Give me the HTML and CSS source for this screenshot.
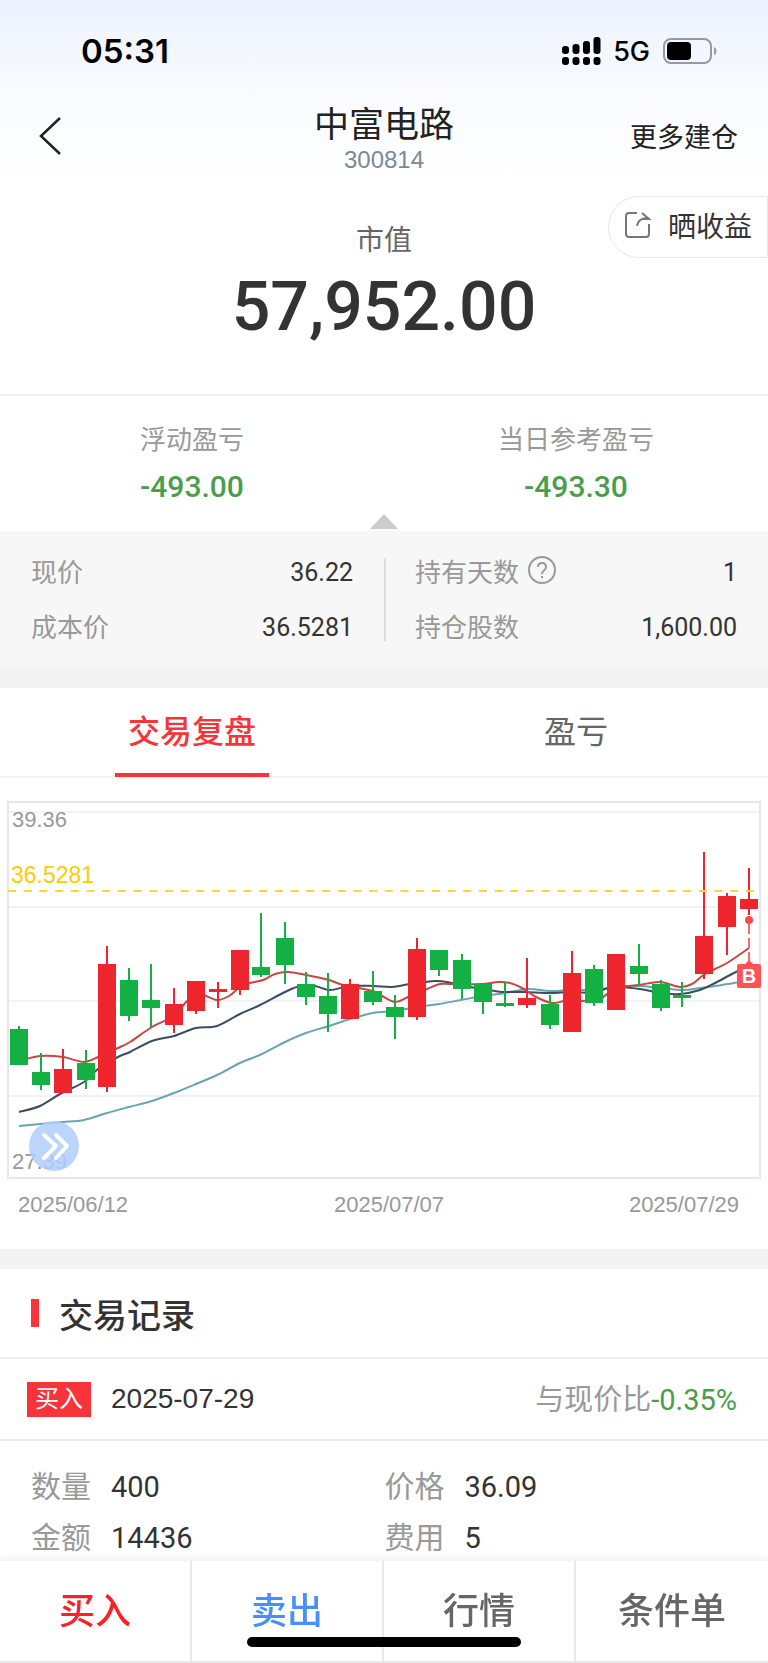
FILE: index.html
```
<!DOCTYPE html>
<html lang="zh-CN">
<head>
<meta charset="utf-8">
<meta name="viewport" content="width=device-width, initial-scale=1">
<title>中富电路 300814</title>
<link rel="stylesheet" href="styles.css">
</head>
<body>
<header class="top">
  <div class="status">
    <span class="clock">05:31</span>
    <span class="signals">
      <svg width="40" height="28" viewBox="0 0 40 28" aria-hidden="true">
        <rect x="1" y="9" width="7" height="8" rx="3"/>
        <rect x="11.500" y="7" width="7" height="10" rx="3"/>
        <rect x="22" y="4" width="7" height="13" rx="3"/>
        <rect x="32.500" y="0" width="7" height="17" rx="3"/>
        <rect x="1" y="20" width="7" height="8" rx="3"/>
        <rect x="11.500" y="20" width="7" height="8" rx="3"/>
        <rect x="22" y="20" width="7" height="8" rx="3"/>
        <rect x="32.500" y="20" width="7" height="8" rx="3"/>
      </svg>
      <span class="network">5G</span>
      <svg width="56" height="28" viewBox="0 0 56 28" aria-hidden="true">
        <rect x="2" y="2" width="47" height="24" rx="7" fill="none" stroke="#96999e" stroke-width="2"/>
        <rect x="5" y="5" width="24" height="18" rx="4"/>
        <path d="M52 10q2.500 1 2.500 4t-2.500 4z" fill="#96999e"/>
      </svg>
    </span>
  </div>
  <nav class="nav">
    <button class="back" type="button" aria-label="返回">
      <svg width="24" height="40" viewBox="0 0 24 40" fill="none" stroke="#222" stroke-width="2.500"><path d="M22 2 3 20l19 18"/></svg>
    </button>
    <div class="title">
      <h1>中富电路</h1>
      <span class="code">300814</span>
    </div>
    <a class="more" href="#more">更多建仓</a>
  </nav>
</header>

<main>
  <section class="value">
    <button class="share" type="button">
      <svg width="28" height="28" viewBox="0 0 28 28" fill="none" stroke="#777" stroke-width="2"><path d="M13 2H5Q2 2 2 5v18q0 3 3 3h17q3 0 3-3V13M13 15q1-8 11-8M18 2l7 6h-7"/></svg>
      <span>晒收益</span>
    </button>
    <span class="value-label">市值</span>
    <strong class="value-number">57,952.00</strong>
  </section>

  <section class="profit">
    <div class="profit-item"><span>浮动盈亏</span><b>-493.00</b></div>
    <div class="profit-item"><span>当日参考盈亏</span><b>-493.30</b></div>
    <i class="pointer"></i>
  </section>

  <section class="holding">
    <dl>
      <div><dt>现价</dt><dd>36.22</dd></div>
      <div><dt>成本价</dt><dd>36.5281</dd></div>
    </dl>
    <dl>
      <div>
        <dt>持有天数
          <svg width="30" height="30" viewBox="0 0 30 30" fill="none" stroke="#999" stroke-width="2"><circle cx="15" cy="15" r="13"/><path d="M11 12q0-4 4-4t4 4q0 2-2 3.500t-2 3.500M15 21v2"/></svg>
        </dt>
        <dd>1</dd>
      </div>
      <div><dt>持仓股数</dt><dd>1,600.00</dd></div>
    </dl>
  </section>

  <div class="tabs" role="tablist">
    <button class="tab tab-active" type="button" role="tab" aria-selected="true">交易复盘</button>
    <button class="tab" type="button" role="tab" aria-selected="false">盈亏</button>
  </div>

  <section class="chart">
    <svg class="plot" viewBox="0 0 768 440" role="img" aria-label="K线图">
      <g class="grid"><path d="M8 22H760M8 117H760M8 211H760M8 306H760"/></g>
      <rect class="frame" x="8" y="12" width="752" height="376"/>
      <g id="averages" class="averages"></g>
      <g id="candles" shape-rendering="crispEdges"></g>
      <path class="cost-line" d="M8 101H757"/>
      <g class="axis">
        <text x="12" y="37">39.36</text>
        <text x="12" y="379">27.39</text>
        <text x="18" y="422">2025/06/12</text>
        <text x="389" y="422" text-anchor="middle">2025/07/07</text>
        <text x="739" y="422" text-anchor="end">2025/07/29</text>
      </g>
      <text class="cost" x="11" y="93">36.5281</text>
      <path class="buy-line" d="M749 134v38"/>
      <circle cx="749" cy="130" r="4" fill="#ff4a4d"/>
      <path d="M739 174h6l4-4 4 4h6q2 0 2 2v20q0 2-2 2h-20q-2 0-2-2v-20q0-2 2-2z" fill="#ff5255"/>
      <text class="buy-mark" x="749" y="193" text-anchor="middle">B</text>
    </svg>
    <button class="expand" type="button" aria-label="展开">
      <svg width="50" height="50" viewBox="0 0 50 50" fill="none" stroke="#fff" stroke-width="4" stroke-linecap="round" stroke-linejoin="round"><path d="M15 14l12 11-12 12M27 14l11 11-11 12"/></svg>
    </button>
  </section>

  <section class="records">
    <h2>交易记录</h2>
    <div class="record-head">
      <span class="badge">买入</span>
      <time datetime="2025-07-29">2025-07-29</time>
      <span class="compare">与现价比<b>-0.35%</b></span>
    </div>
    <dl class="record">
      <div><dt>数量</dt><dd>400</dd></div>
      <div><dt>价格</dt><dd>36.09</dd></div>
      <div><dt>金额</dt><dd>14436</dd></div>
      <div><dt>费用</dt><dd>5</dd></div>
    </dl>
  </section>
</main>

<footer class="actions">
  <button class="action buy" type="button">买入</button>
  <button class="action sell" type="button">卖出</button>
  <button class="action" type="button">行情</button>
  <button class="action" type="button">条件单</button>
  <i class="home"></i>
</footer>
<script src="chart.js"></script>
</body>
</html>
```
FILE: styles.css
```
* { box-sizing: border-box; }
body {
  margin: 0;
  background: #fff;
  color: #333;
  font-family: Roboto, "Noto Sans CJK SC", sans-serif;
}
h1, h2, dl, dd { margin: 0; }
button {
  margin: 0;
  padding: 0;
  border: 0;
  background: none;
  color: inherit;
  font: inherit;
}
svg { display: block; }

.top {
  height: 184px;
  background: linear-gradient(#edf4ff, #f2f6ff 25%, #fafcff 60%, #fff);
}
.status {
  display: flex;
  justify-content: space-between;
  align-items: center;
  height: 102px;
  padding: 0 50px 0 81px;
  color: #000;
  font-family: Inter, sans-serif;
}
.clock { font-size: 33px; font-weight: 600; }
.signals { display: flex; align-items: center; gap: 12px; }
.network { font-size: 27px; font-weight: 500; }
.nav {
  display: grid;
  grid-template-columns: 1fr auto 1fr;
  align-items: center;
  height: 72px;
  padding: 0 30px;
}
.back { justify-self: start; padding: 0 8px 4px; }
.title {
  display: flex;
  flex-direction: column;
  align-items: center;
}
h1 { color: #222; font-size: 35px; font-weight: 400; line-height: 44px; }
.code {
  color: #7d8994;
  font-family: "Liberation Sans", sans-serif;
  font-size: 24px;
  line-height: 24px;
}
.more {
  justify-self: end;
  padding-bottom: 6px;
  color: #222;
  font-size: 27px;
  text-decoration: none;
}

.value {
  position: relative;
  display: flex;
  flex-direction: column;
  align-items: center;
  height: 212px;
  padding-top: 37px;
  border-bottom: 2px solid #efefef;
}
.value-label { color: #666; font-size: 28px; line-height: 40px; }
.value-number { font-size: 68px; font-weight: 500; line-height: 92px; }
.share {
  position: absolute;
  top: 12px;
  right: 0;
  display: flex;
  align-items: center;
  gap: 16px;
  height: 62px;
  padding: 0 15px 5px;
  border: 1px solid #e8e8e8;
  border-radius: 31px 0 0 31px;
  font-size: 28px;
}

.profit {
  position: relative;
  display: grid;
  grid-template-columns: 1fr 1fr;
  height: 135px;
  padding-top: 24px;
}
.profit-item { display: flex; flex-direction: column; align-items: center; gap: 7px; }
.profit-item span { color: #999; font-size: 26px; line-height: 40px; }
.profit-item b { color: #4a9d4a; font-size: 30px; font-weight: 500; line-height: 40px; }
.pointer {
  position: absolute;
  bottom: 2px;
  left: 50%;
  width: 28px;
  height: 15px;
  margin-left: -14px;
  background: #ccc;
  clip-path: polygon(50% 0, 100% 100%, 0 100%);
}

.holding {
  display: grid;
  grid-template-columns: 1fr 1fr;
  padding: 27px 0;
  background: #f7f7f7;
  border-bottom: 20px solid #f3f3f3;
}
.holding dl { padding: 0 31px; }
.holding dl + dl { padding-left: 29px; border-left: 2px solid #ddd; }
.holding dl div {
  display: flex;
  justify-content: space-between;
  align-items: center;
  height: 28px;
}
.holding dl div + div { margin-top: 27px; }
.holding dt {
  display: flex;
  align-items: center;
  gap: 8px;
  padding-bottom: 4px;
  color: #999;
  font-size: 26px;
}
.holding dd { font-size: 25px; }

.tabs {
  display: grid;
  grid-template-columns: 1fr 1fr;
  height: 90px;
  border-bottom: 2px solid #f3f3f3;
}
.tab { position: relative; padding-bottom: 6px; color: #666; font-size: 32px; }
.tab-active { color: #f8333a; font-weight: 500; }
.tab-active::after {
  content: "";
  position: absolute;
  right: 30%;
  bottom: -1px;
  left: 30%;
  height: 4px;
  background: #f8333a;
}

.chart { position: relative; padding: 12px 0 19px; border-bottom: 20px solid #f3f3f3; }
.plot { width: 100%; height: auto; font-family: "Liberation Sans", sans-serif; }
.grid { stroke: #f1f1f7; stroke-width: 2; }
.frame { fill: none; stroke: #e6e6ed; stroke-width: 2; }
.averages { fill: none; stroke-width: 2; }
.cost-line { stroke: #fbd634; stroke-width: 2; stroke-dasharray: 8 7.7; }
.axis { fill: #999; font-size: 22px; }
.cost { fill: #fc0; font-size: 23px; }
.buy-line { stroke: #ff6668; stroke-width: 2; stroke-dasharray: 10 4; }
.buy-mark { fill: #fff; font-size: 20px; font-weight: 700; }
.expand {
  position: absolute;
  bottom: 78px;
  left: 29px;
  border-radius: 50%;
  background: rgba(176, 206, 255, 0.85);
}

h2 {
  display: flex;
  align-items: center;
  gap: 20px;
  height: 90px;
  padding: 0 31px;
  border-bottom: 2px solid #efefef;
  font-size: 34px;
  font-weight: 500;
}
h2::before { content: ""; width: 8px; height: 28px; background: #f8333a; }
.record-head {
  display: flex;
  align-items: center;
  height: 82px;
  padding: 0 31px 0 27px;
  border-bottom: 2px solid #efefef;
  font-size: 28px;
}
.badge {
  padding: 0 8px;
  background: #f8333a;
  color: #fff;
  font-size: 24px;
  line-height: 35px;
}
.record-head time { margin-left: 20px; font-family: "Liberation Sans", sans-serif; }
.compare { margin-left: auto; padding-bottom: 5px; color: #999; font-size: 29px; }
.compare b { color: #4a9d4a; font-weight: 400; }
.record {
  display: grid;
  grid-template-columns: 50% 1fr;
  row-gap: 11px;
  padding: 26px 0 80px 31px;
}
.record div { display: flex; gap: 20px; line-height: 40px; }
.record div:nth-child(even) { margin-left: -15px; }
.record dt { color: #999; font-size: 30px; }
.record dd { font-size: 29px; }

.actions {
  position: fixed;
  right: 0;
  bottom: 0;
  left: 0;
  display: grid;
  grid-template-columns: repeat(4, 1fr);
  height: 102px;
  background: #fff;
  border-bottom: 2px solid #e8e8e8;
  box-shadow: 0 -2px 8px rgba(0, 0, 0, 0.08);
}
.action {
  padding-bottom: 6px;
  border-right: 2px solid #e8e8e8;
  color: #666;
  font-size: 36px;
  font-weight: 500;
}
.action:nth-child(4) { border-right: 0; }
.buy { color: #ff2027; }
.sell { color: #468fff; }
.home {
  position: absolute;
  bottom: 14px;
  left: 50%;
  width: 274px;
  height: 10px;
  margin-left: -137px;
  border-radius: 5px;
  background: #000;
}
```
FILE: chart.js
```
const NS = "http://www.w3.org/2000/svg";
const RED = "#ee252c";
const GREEN = "#15b043";

// centre x, body top, body bottom, wick top, wick bottom, colour
const candles = [
  [19, 239, 275, 236, 275, GREEN], [41, 282, 295, 263, 300, GREEN],
  [63, 279, 303, 259, 303, RED], [86, 273, 290, 260, 299, GREEN],
  [107, 174, 297, 156, 302, RED], [129, 190, 226, 178, 231, GREEN],
  [151, 210, 218, 174, 237, GREEN], [174, 214, 235, 198, 243, RED],
  [196, 191, 221, 191, 224, RED], [218, 199, 202, 192, 218, RED],
  [240, 160, 200, 160, 205, RED], [261, 177, 185, 123, 187, GREEN],
  [285, 148, 175, 132, 194, GREEN], [306, 194, 207, 182, 215, GREEN],
  [328, 206, 224, 183, 242, GREEN], [350, 194, 229, 189, 229, RED],
  [373, 201, 212, 181, 215, GREEN], [395, 217, 227, 205, 249, GREEN],
  [417, 159, 227, 148, 230, RED], [439, 160, 180, 160, 186, GREEN],
  [462, 170, 199, 164, 209, GREEN], [483, 194, 212, 194, 224, GREEN],
  [505, 213, 216, 192, 217, GREEN], [527, 208, 215, 168, 218, RED],
  [550, 214, 235, 205, 239, GREEN], [572, 183, 242, 161, 242, RED],
  [594, 179, 213, 175, 216, GREEN], [616, 164, 220, 164, 220, RED],
  [639, 176, 184, 154, 195, GREEN], [661, 194, 218, 190, 221, GREEN],
  [682, 205, 208, 192, 217, GREEN], [704, 146, 184, 62, 189, RED],
  [727, 106, 137, 103, 165, RED], [749, 109, 119, 78, 125, RED]
];

const averages = [
  ["#69a5ad", [[19,336],[40,334],[63,332],[84,330],[107,323],[129,317],[152,311],[174,303],[196,294],[217,285],[240,273],[262,264],[285,252],[306,243],[329,236],[350,229],[373,223],[395,221],[417,217],[439,214],[461,210],[483,206],[505,203],[528,199],[550,201],[572,200],[594,200],[616,197],[640,196],[660,198],[683,200],[700,198],[715,196],[734,193],[749,190]]],
  ["#3d4d60", [[19,322],[40,316],[60,304],[84,292],[98,279],[118,267],[130,262],[152,251],[174,246],[196,238],[217,236],[240,224],[260,215],[285,202],[300,196],[315,196],[330,200],[350,196],[373,196],[392,197],[410,194],[435,191],[452,193],[475,198],[495,201],[505,202],[525,202],[550,203],[572,202],[594,203],[605,199],[615,197],[640,199],[660,203],[680,204],[700,200],[715,193],[734,183],[749,176]]],
  ["#c94643", [[19,271],[40,266],[63,267],[84,272],[98,267],[118,258],[130,252],[152,237],[174,226],[186,212],[196,203],[204,205],[217,210],[229,206],[240,197],[250,193],[263,190],[275,184],[288,182],[306,185],[329,190],[343,195],[373,201],[382,206],[395,212],[408,207],[427,199],[440,194],[452,194],[483,194],[498,192],[510,193],[522,198],[536,207],[552,213],[565,211],[582,211],[600,209],[616,198],[639,195],[660,192],[680,197],[692,194],[705,184],[727,173],[749,158]]]
];

function add(parent, name, attributes) {
  const node = document.createElementNS(NS, name);
  for (const key in attributes) node.setAttribute(key, attributes[key]);
  parent.appendChild(node);
}

// Catmull-Rom spline through the points, written as cubic segments
function smooth(points) {
  let d = "M" + points[0];
  for (let i = 0; i < points.length - 1; i++) {
    const p0 = points[i - 1] || points[i];
    const p1 = points[i];
    const p2 = points[i + 1];
    const p3 = points[i + 2] || p2;
    d += `C${p1[0] + (p2[0] - p0[0]) / 6} ${p1[1] + (p2[1] - p0[1]) / 6} ${p2[0] - (p3[0] - p1[0]) / 6} ${p2[1] - (p3[1] - p1[1]) / 6} ${p2[0]} ${p2[1]}`;
  }
  return d;
}

for (const [stroke, points] of averages) {
  add(document.getElementById("averages"), "path", { d: smooth(points), stroke });
}
for (const [x, top, bottom, high, low, fill] of candles) {
  const group = document.getElementById("candles");
  add(group, "rect", { x: x - 1, y: high, width: 2, height: low - high, fill });
  add(group, "rect", { x: x - 9, y: top, width: 18, height: bottom - top, fill });
}
```
